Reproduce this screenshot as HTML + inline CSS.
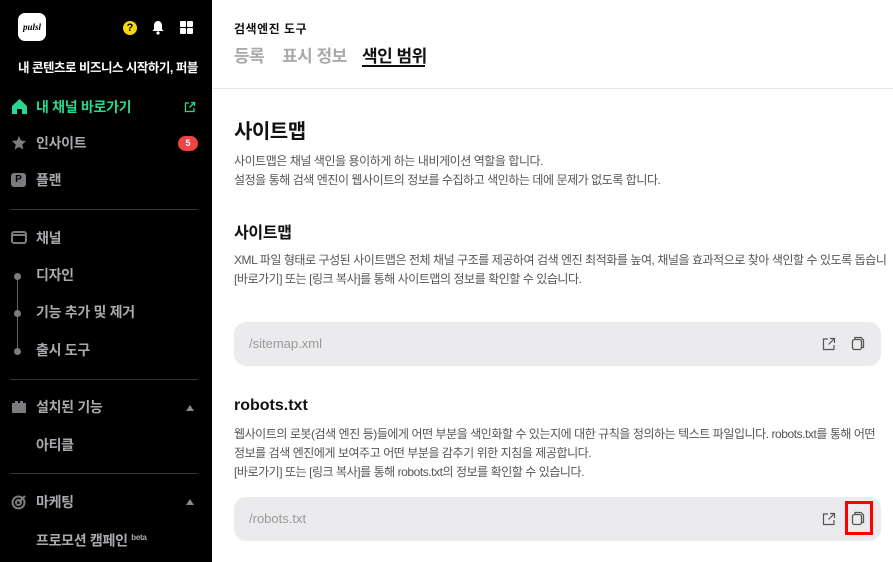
<!DOCTYPE html>
<html><head><meta charset="utf-8"><style>
*{margin:0;padding:0;box-sizing:border-box}
body{width:893px;height:562px;overflow:hidden;font-family:"Liberation Sans","Noto Sans CJK KR",sans-serif;background:#fff;position:relative}
.sb{position:absolute;left:0;top:0;width:212px;height:562px;background:#000;color:#a9a9ae}
.abs{position:absolute}
.it{position:absolute;left:36px;font-size:14px;font-weight:bold;line-height:18px;letter-spacing:-0.3px;white-space:nowrap}
.hr{position:absolute;left:10px;width:188px;height:1px;background:#333}
.ic{position:absolute;left:11px}
.main{position:absolute;left:212px;top:0;right:0;height:562px;overflow:hidden}
.t{position:absolute;left:22px;white-space:nowrap}
.box{position:absolute;left:22px;width:647px;height:44px;background:#ebebee;border-radius:12px;font-size:13px;color:#999;padding:14px 0 0 15px}
p{font-size:12px;color:#555;line-height:19px;letter-spacing:-0.45px}
</style></head><body>
<div class="sb">
  <div class="abs" style="left:18px;top:13px;width:28px;height:28px;background:#fff;border-radius:7px;font:bold 9px 'Liberation Serif',serif;color:#000;text-align:center;line-height:28px;font-style:italic">pulsl</div>
  <div class="abs" style="left:123px;top:21px;width:14px;height:14px;border-radius:50%;background:#f5d90a;color:#000;font:bold 11px 'Liberation Sans';text-align:center;line-height:14px">?</div>
  <svg class="abs" style="left:151px;top:20px" width="14" height="15" viewBox="0 0 14 15"><path d="M7 1C4.5 1 3 3 3 5.5V9L1.5 11h11L11 9V5.5C11 3 9.5 1 7 1z" fill="#fff"/><circle cx="7" cy="13" r="1.6" fill="#fff"/></svg>
  <svg class="abs" style="left:180px;top:21px" width="13" height="13"><rect x="0" y="0" width="6" height="6" rx="1" fill="#fff"/><rect x="7" y="0" width="6" height="6" rx="1" fill="#fff"/><rect x="0" y="7" width="6" height="6" rx="1" fill="#fff"/><rect x="7" y="7" width="6" height="6" rx="1" fill="#fff"/></svg>
  <div class="abs" style="left:18px;top:57px;font-size:12.5px;font-weight:bold;color:#fff;white-space:nowrap;letter-spacing:-0.5px">내 콘텐츠로 비즈니스 시작하기, 퍼블</div>

  <svg class="ic" style="top:98px" width="17" height="17"><path d="M1 8L8.5 1 16 8V16H11V11H6V16H1z" fill="#2bd68e"/></svg>
  <div class="it" style="top:98px;color:#2bd68e">내 채널 바로가기</div>
  <svg class="abs" style="left:184px;top:101px" width="12" height="12" viewBox="0 0 12 12" fill="none" stroke="#2bd68e" stroke-width="1.3"><path d="M5 2H1.5V10.5H10V7M7 1.5H10.5V5M10.5 1.5L5.5 6.5"/></svg>
  <svg class="ic" style="top:135px" width="16" height="16"><path d="M8 1L10 5.5 15 6 11.3 9.5 12.3 14.5 8 12 3.7 14.5 4.7 9.5 1 6 6 5.5z" fill="#7c7c80"/></svg>
  <div class="it" style="top:134px">인사이트</div>
  <div class="abs" style="left:178px;top:136px;width:20px;height:15px;border-radius:8px;background:#f04444;color:#fff;font-size:9px;font-weight:bold;text-align:center;line-height:15px">5</div>
  <div class="ic abs" style="top:173px;width:15px;height:14px;border-radius:3px;background:#7c7c80;color:#000;font-size:10px;font-weight:bold;text-align:center;line-height:14px">P</div>
  <div class="it" style="top:171px">플랜</div>
  <div class="hr" style="top:209px"></div>

  <svg class="ic" style="top:231px" width="16" height="13"><rect x="1" y="1" width="14" height="11" rx="2" fill="none" stroke="#7c7c80" stroke-width="2"/><rect x="1" y="3" width="14" height="2" fill="#7c7c80"/></svg>
  <div class="it" style="top:229px">채널</div>
  <div class="abs" style="left:17px;top:276px;width:1px;height:76px;background:#666"></div>
  <div class="abs" style="left:14px;top:273px;width:7px;height:7px;border-radius:50%;background:#7c7c80"></div>
  <div class="abs" style="left:14px;top:310px;width:7px;height:7px;border-radius:50%;background:#7c7c80"></div>
  <div class="abs" style="left:14px;top:348px;width:7px;height:7px;border-radius:50%;background:#7c7c80"></div>
  <div class="it" style="top:266px">디자인</div>
  <div class="it" style="top:303px">기능 추가 및 제거</div>
  <div class="it" style="top:341px">출시 도구</div>
  <div class="hr" style="top:379px"></div>

  <svg class="ic" style="top:400px" width="16" height="13"><path d="M1 3H4V1H7V3H9V1H12V3H15V13H1z" fill="#7c7c80"/></svg>
  <div class="it" style="top:398px">설치된 기능</div>
  <div class="abs" style="left:186px;top:405px;width:0;height:0;border-left:4px solid transparent;border-right:4px solid transparent;border-bottom:6px solid #888"></div>
  <div class="it" style="top:436px">아티클</div>
  <div class="hr" style="top:473px"></div>

  <svg class="ic" style="top:494px" width="16" height="16" fill="none" stroke="#7c7c80" stroke-width="2"><circle cx="7.5" cy="8.5" r="6"/><circle cx="7.5" cy="8.5" r="2.5"/><path d="M8 8L14 2"/></svg>
  <div class="it" style="top:493px">마케팅</div>
  <div class="abs" style="left:186px;top:499px;width:0;height:0;border-left:4px solid transparent;border-right:4px solid transparent;border-bottom:6px solid #888"></div>
  <div class="it" style="top:529px">프로모션 캠페인 <sup style="font-size:8px">beta</sup></div>
</div>

<div class="main">
  <div class="t" style="top:20px;font-size:12px;font-weight:bold;color:#111;letter-spacing:0.5px">검색엔진 도구</div>
  <div class="t" style="top:42px;font-size:17px;font-weight:bold;color:#aaa;letter-spacing:-0.5px">등록</div>
  <div class="t" style="left:70px;top:42px;font-size:17px;font-weight:bold;color:#aaa;letter-spacing:-0.5px">표시 정보</div>
  <div class="t" style="left:150px;top:42px;font-size:17px;font-weight:bold;color:#111;letter-spacing:-0.5px">색인 범위</div>
  <div class="abs" style="left:150px;top:65px;width:63px;height:2px;background:#111"></div>
  <div class="abs" style="left:0;top:88px;width:681px;height:1px;background:#e6e6e6"></div>

  <div class="t" style="top:115px;font-size:20px;font-weight:bold;color:#111;letter-spacing:-0.5px">사이트맵</div>
  <div class="t" style="top:152px"><p>사이트맵은 채널 색인을 용이하게 하는 내비게이션 역할을 합니다.<br>설정을 통해 검색 엔진이 웹사이트의 정보를 수집하고 색인하는 데에 문제가 없도록 합니다.</p></div>

  <div class="t" style="top:219px;font-size:16px;font-weight:bold;color:#111;letter-spacing:-0.3px">사이트맵</div>
  <div class="t" style="top:251px"><p>XML 파일 형태로 구성된 사이트맵은 전체 채널 구조를 제공하여 검색 엔진 최적화를 높여, 채널을 효과적으로 찾아 색인할 수 있도록 돕습니<br>[바로가기] 또는 [링크 복사]를 통해 사이트맵의 정보를 확인할 수 있습니다.</p></div>
  <div class="box" style="top:322px">/sitemap.xml</div>

  <div class="t" style="top:397px;font-size:16px;font-weight:bold;color:#111">robots.txt</div>
  <div class="t" style="top:425px"><p>웹사이트의 로봇(검색 엔진 등)들에게 어떤 부분을 색인화할 수 있는지에 대한 규칙을 정의하는 텍스트 파일입니다. robots.txt를 통해 어떤<br>정보를 검색 엔진에게 보여주고 어떤 부분을 감추기 위한 지침을 제공합니다.<br>[바로가기] 또는 [링크 복사]를 통해 robots.txt의 정보를 확인할 수 있습니다.</p></div>
  <div class="box" style="top:497px">/robots.txt</div>
</div>

<svg class="abs" style="left:822px;top:337px" width="14" height="14" viewBox="0 0 14 14" fill="none" stroke="#555" stroke-width="1.2"><path d="M6 2H1.5V12.5H12V8M8 1.5H12.5V6M12.5 1.5L6.5 7.5"/></svg>
<svg class="abs" style="left:851px;top:336px" width="14" height="15" viewBox="0 0 14 15" fill="none" stroke="#555" stroke-width="1.3"><path d="M4 3V1.5H10L12.5 4V11.5H10.5"/><rect x="1.5" y="3.5" width="9" height="10" rx="2"/></svg>
<svg class="abs" style="left:822px;top:512px" width="14" height="14" viewBox="0 0 14 14" fill="none" stroke="#555" stroke-width="1.2"><path d="M6 2H1.5V12.5H12V8M8 1.5H12.5V6M12.5 1.5L6.5 7.5"/></svg>
<svg class="abs" style="left:851px;top:511px" width="14" height="15" viewBox="0 0 14 15" fill="none" stroke="#555" stroke-width="1.3"><path d="M4 3V1.5H10L12.5 4V11.5H10.5"/><rect x="1.5" y="3.5" width="9" height="10" rx="2"/></svg>
<div class="abs" style="left:845px;top:501px;width:28px;height:34px;border:3px solid #f00"></div>
</body></html>
